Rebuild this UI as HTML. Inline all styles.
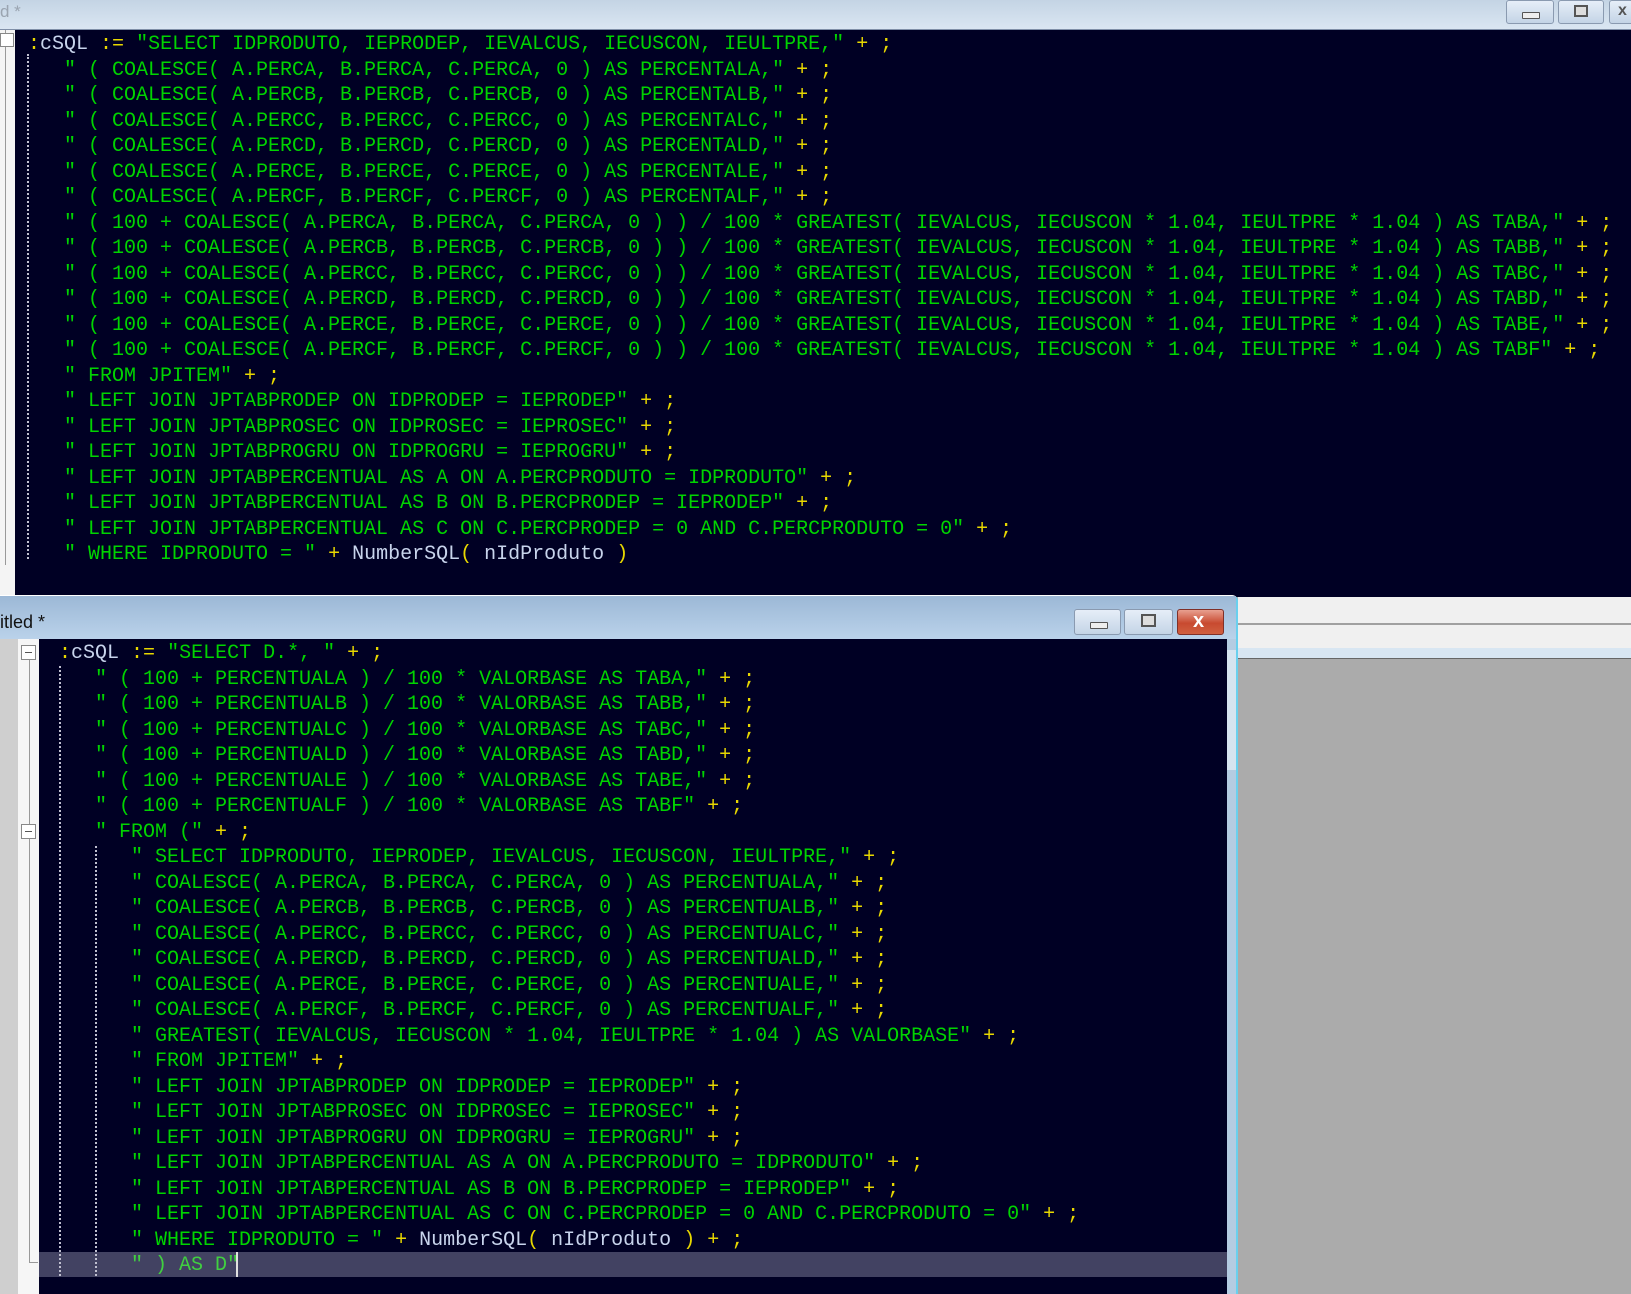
<!DOCTYPE html>
<html><head><meta charset="utf-8"><style>
html,body{margin:0;padding:0;}
body{width:1631px;height:1294px;position:relative;overflow:hidden;background:#ababab;font-family:"Liberation Mono",monospace;}
.abs{position:absolute;}
pre{margin:0;font-family:"Liberation Mono",monospace;font-size:20px;line-height:25.5px;color:#00d400;white-space:pre;}
.y{color:#e8d800}.w{color:#c8d4ec}
.title{background:linear-gradient(#c4d4e4,#dae6f2);}
.btn{position:absolute;border:1px solid #8a9ab0;border-radius:3px;background:linear-gradient(#e6eef8,#c4d4e6);box-sizing:border-box;}
.dot{position:absolute;width:0;border-left:2px dotted #c0c0d0;}
</style></head><body>
<!-- top window -->
<div class="abs title" style="left:0;top:0;width:1631px;height:30px;border-bottom:1px solid #8090a8;box-sizing:border-box"></div>
<div class="abs" style="left:0;top:2px;font-family:'Liberation Sans',sans-serif;font-size:17px;color:#9aa4b0">d *</div>
<div class="btn" style="left:1506px;top:0;width:48px;height:24px"><div class="abs" style="left:15px;top:11px;width:16px;height:5px;border:1px solid #555;background:#eee;border-radius:1px"></div></div>
<div class="btn" style="left:1558px;top:0;width:46px;height:24px"><div class="abs" style="left:15px;top:4px;width:14px;height:12px;border:2px solid #555;box-sizing:border-box;background:#ddd"></div></div>
<div class="btn" style="left:1609px;top:0;width:30px;height:24px"><div class="abs" style="left:8px;top:1px;font:bold 16px 'Liberation Sans';color:#555">x</div></div>
<div class="abs" style="left:0;top:30px;width:15px;height:567px;background:#f4f4f4"></div>
<div class="abs" style="left:5px;top:30px;width:1px;height:535px;background:#999"></div>
<div class="abs" style="left:0;top:33px;width:12px;height:12px;border:1px solid #888;background:#fff"></div>
<div class="abs" style="left:15px;top:30px;width:1616px;height:567px;background:#000024"></div>
<div class="dot" style="left:27px;top:54px;height:505px"></div>
<pre class="abs" style="left:28px;top:32px"><span class="y">:</span><span class="w">cSQL</span> <span class="y">:=</span> "SELECT IDPRODUTO, IEPRODEP, IEVALCUS, IECUSCON, IEULTPRE," <span class="y">+ ;</span>
   " ( COALESCE( A.PERCA, B.PERCA, C.PERCA, 0 ) AS PERCENTALA," <span class="y">+ ;</span>
   " ( COALESCE( A.PERCB, B.PERCB, C.PERCB, 0 ) AS PERCENTALB," <span class="y">+ ;</span>
   " ( COALESCE( A.PERCC, B.PERCC, C.PERCC, 0 ) AS PERCENTALC," <span class="y">+ ;</span>
   " ( COALESCE( A.PERCD, B.PERCD, C.PERCD, 0 ) AS PERCENTALD," <span class="y">+ ;</span>
   " ( COALESCE( A.PERCE, B.PERCE, C.PERCE, 0 ) AS PERCENTALE," <span class="y">+ ;</span>
   " ( COALESCE( A.PERCF, B.PERCF, C.PERCF, 0 ) AS PERCENTALF," <span class="y">+ ;</span>
   " ( 100 + COALESCE( A.PERCA, B.PERCA, C.PERCA, 0 ) ) / 100 * GREATEST( IEVALCUS, IECUSCON * 1.04, IEULTPRE * 1.04 ) AS TABA," <span class="y">+ ;</span>
   " ( 100 + COALESCE( A.PERCB, B.PERCB, C.PERCB, 0 ) ) / 100 * GREATEST( IEVALCUS, IECUSCON * 1.04, IEULTPRE * 1.04 ) AS TABB," <span class="y">+ ;</span>
   " ( 100 + COALESCE( A.PERCC, B.PERCC, C.PERCC, 0 ) ) / 100 * GREATEST( IEVALCUS, IECUSCON * 1.04, IEULTPRE * 1.04 ) AS TABC," <span class="y">+ ;</span>
   " ( 100 + COALESCE( A.PERCD, B.PERCD, C.PERCD, 0 ) ) / 100 * GREATEST( IEVALCUS, IECUSCON * 1.04, IEULTPRE * 1.04 ) AS TABD," <span class="y">+ ;</span>
   " ( 100 + COALESCE( A.PERCE, B.PERCE, C.PERCE, 0 ) ) / 100 * GREATEST( IEVALCUS, IECUSCON * 1.04, IEULTPRE * 1.04 ) AS TABE," <span class="y">+ ;</span>
   " ( 100 + COALESCE( A.PERCF, B.PERCF, C.PERCF, 0 ) ) / 100 * GREATEST( IEVALCUS, IECUSCON * 1.04, IEULTPRE * 1.04 ) AS TABF" <span class="y">+ ;</span>
   " FROM JPITEM" <span class="y">+ ;</span>
   " LEFT JOIN JPTABPRODEP ON IDPRODEP = IEPRODEP" <span class="y">+ ;</span>
   " LEFT JOIN JPTABPROSEC ON IDPROSEC = IEPROSEC" <span class="y">+ ;</span>
   " LEFT JOIN JPTABPROGRU ON IDPROGRU = IEPROGRU" <span class="y">+ ;</span>
   " LEFT JOIN JPTABPERCENTUAL AS A ON A.PERCPRODUTO = IDPRODUTO" <span class="y">+ ;</span>
   " LEFT JOIN JPTABPERCENTUAL AS B ON B.PERCPRODEP = IEPRODEP" <span class="y">+ ;</span>
   " LEFT JOIN JPTABPERCENTUAL AS C ON C.PERCPRODEP = 0 AND C.PERCPRODUTO = 0" <span class="y">+ ;</span>
   " WHERE IDPRODUTO = " <span class="y">+</span> <span class="w">NumberSQL</span><span class="y">(</span> <span class="w">nIdProduto</span> <span class="y">)</span></pre>

<!-- right area under top window -->
<div class="abs" style="left:1238px;top:597px;width:393px;height:26px;background:#f0f0f0"></div>
<div class="abs" style="left:1238px;top:623px;width:393px;height:2px;background:#a0a0a0"></div>
<div class="abs" style="left:1238px;top:625px;width:393px;height:23px;background:#f0f0f0"></div>
<div class="abs" style="left:1238px;top:648px;width:393px;height:10px;background:#d8e6f2"></div>
<div class="abs" style="left:1238px;top:658px;width:393px;height:1px;background:#666"></div>

<!-- bottom window -->
<div class="abs" style="left:0;top:595px;width:1238px;height:699px;background:#b4cce2;border-right:2px solid #6ad0ee;border-top:1px solid #fff;box-sizing:border-box;border-top-right-radius:6px"></div>
<div class="abs" style="left:0;top:596px;width:1236px;height:43px;background:linear-gradient(#9cb8d6,#bad2ea)"></div>
<div class="abs" style="left:0;top:612px;font-family:'Liberation Sans',sans-serif;font-size:18px;color:#111">itled *</div>
<div class="btn" style="left:1074px;top:609px;width:47px;height:26px"><div class="abs" style="left:15px;top:12px;width:16px;height:5px;border:1px solid #555;background:#eee;border-radius:1px"></div></div>
<div class="btn" style="left:1124px;top:609px;width:49px;height:26px"><div class="abs" style="left:16px;top:4px;width:15px;height:13px;border:2px solid #555;box-sizing:border-box;background:#ddd"></div></div>
<div class="btn" style="left:1177px;top:609px;width:47px;height:26px;background:linear-gradient(#e8a090,#c84a30 55%,#d06040);border-color:#803028"><div class="abs" style="left:15px;top:0px;font:bold 20px 'Liberation Sans';color:#fff">x</div></div>
<div class="abs" style="left:0;top:639px;width:18px;height:655px;background:#cfcfcf"></div>
<div class="abs" style="left:18px;top:639px;width:21px;height:655px;background:#f6f6f6"></div>
<div class="abs" style="left:29px;top:660px;width:1px;height:603px;background:#999"></div>
<div class="abs" style="left:29px;top:1262px;width:9px;height:1px;background:#999"></div>
<div class="abs" style="left:21px;top:645px;width:15px;height:15px;border:1px solid #888;background:#fff;box-sizing:border-box"><div class="abs" style="left:3px;top:6px;width:7px;height:1px;background:#555"></div></div>
<div class="abs" style="left:21px;top:824px;width:15px;height:15px;border:1px solid #888;background:#fff;box-sizing:border-box"><div class="abs" style="left:3px;top:6px;width:7px;height:1px;background:#555"></div></div>
<div class="abs" style="left:39px;top:639px;width:1188px;height:655px;background:#000024"></div>
<div class="abs" style="left:1227px;top:650px;width:9px;height:120px;background:#d6e4f0"></div>
<div class="abs" style="left:39px;top:1252px;width:1188px;height:25px;background:#424262"></div>
<div class="dot" style="left:59px;top:666px;height:610px"></div>
<div class="dot" style="left:95px;top:846px;height:430px"></div>
<pre class="abs" style="left:59px;top:641px"><span class="y">:</span><span class="w">cSQL</span> <span class="y">:=</span> "SELECT D.*, " <span class="y">+ ;</span>
   " ( 100 + PERCENTUALA ) / 100 * VALORBASE AS TABA," <span class="y">+ ;</span>
   " ( 100 + PERCENTUALB ) / 100 * VALORBASE AS TABB," <span class="y">+ ;</span>
   " ( 100 + PERCENTUALC ) / 100 * VALORBASE AS TABC," <span class="y">+ ;</span>
   " ( 100 + PERCENTUALD ) / 100 * VALORBASE AS TABD," <span class="y">+ ;</span>
   " ( 100 + PERCENTUALE ) / 100 * VALORBASE AS TABE," <span class="y">+ ;</span>
   " ( 100 + PERCENTUALF ) / 100 * VALORBASE AS TABF" <span class="y">+ ;</span>
   " FROM (" <span class="y">+ ;</span>
      " SELECT IDPRODUTO, IEPRODEP, IEVALCUS, IECUSCON, IEULTPRE," <span class="y">+ ;</span>
      " COALESCE( A.PERCA, B.PERCA, C.PERCA, 0 ) AS PERCENTUALA," <span class="y">+ ;</span>
      " COALESCE( A.PERCB, B.PERCB, C.PERCB, 0 ) AS PERCENTUALB," <span class="y">+ ;</span>
      " COALESCE( A.PERCC, B.PERCC, C.PERCC, 0 ) AS PERCENTUALC," <span class="y">+ ;</span>
      " COALESCE( A.PERCD, B.PERCD, C.PERCD, 0 ) AS PERCENTUALD," <span class="y">+ ;</span>
      " COALESCE( A.PERCE, B.PERCE, C.PERCE, 0 ) AS PERCENTUALE," <span class="y">+ ;</span>
      " COALESCE( A.PERCF, B.PERCF, C.PERCF, 0 ) AS PERCENTUALF," <span class="y">+ ;</span>
      " GREATEST( IEVALCUS, IECUSCON * 1.04, IEULTPRE * 1.04 ) AS VALORBASE" <span class="y">+ ;</span>
      " FROM JPITEM" <span class="y">+ ;</span>
      " LEFT JOIN JPTABPRODEP ON IDPRODEP = IEPRODEP" <span class="y">+ ;</span>
      " LEFT JOIN JPTABPROSEC ON IDPROSEC = IEPROSEC" <span class="y">+ ;</span>
      " LEFT JOIN JPTABPROGRU ON IDPROGRU = IEPROGRU" <span class="y">+ ;</span>
      " LEFT JOIN JPTABPERCENTUAL AS A ON A.PERCPRODUTO = IDPRODUTO" <span class="y">+ ;</span>
      " LEFT JOIN JPTABPERCENTUAL AS B ON B.PERCPRODEP = IEPRODEP" <span class="y">+ ;</span>
      " LEFT JOIN JPTABPERCENTUAL AS C ON C.PERCPRODEP = 0 AND C.PERCPRODUTO = 0" <span class="y">+ ;</span>
      " WHERE IDPRODUTO = " <span class="y">+</span> <span class="w">NumberSQL</span><span class="y">(</span> <span class="w">nIdProduto</span> <span class="y">) + ;</span>
      <span style="color:#40d040">" ) AS D"</span></pre>
<div class="abs" style="left:236px;top:1252px;width:2px;height:25px;background:#e0e0e0"></div>
</body></html>
